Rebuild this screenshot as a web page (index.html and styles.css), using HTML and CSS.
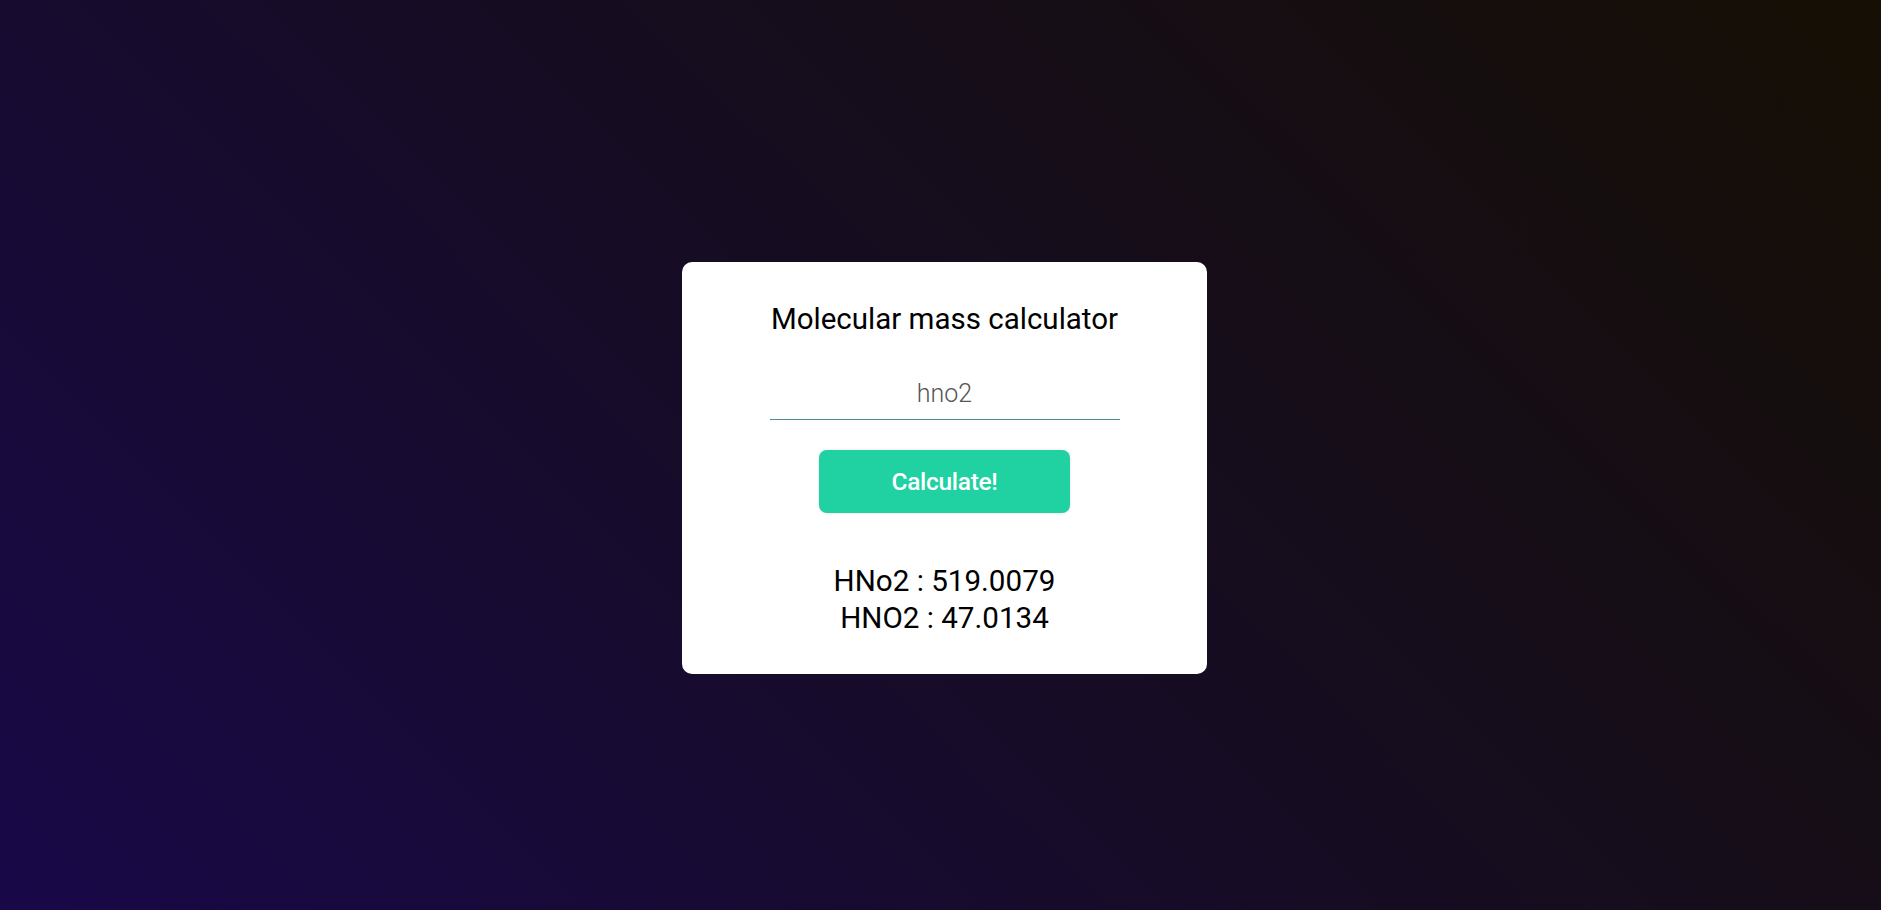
FILE: index.html
```html
<!DOCTYPE html>
<html lang="en">
<head>
<meta charset="utf-8">
<title>Molecular mass calculator</title>
<link rel="stylesheet" href="styles.css">
</head>
<body>
<main class="page">
  <section class="card">
    <h1 class="title">Molecular mass calculator</h1>
    <input class="formula" type="text" value="hno2">
    <button class="calc-btn" type="button">Calculate!</button>
    <div class="results">
      <div class="result">HNo2 : 519.0079</div>
      <div class="result">HNO2 : 47.0134</div>
    </div>
  </section>
</main>
</body>
</html>
```

FILE: styles.css
```css
* { box-sizing: border-box; }

html, body {
  margin: 0;
  height: 100%;
}

body {
  font-family: Roboto, "Liberation Sans", sans-serif;
  background: linear-gradient(45deg, #180848 0%, #160c22 50%, #150f04 100%);
  color: #000;
}

.page {
  height: 100%;
  display: flex;
  align-items: center;
  justify-content: center;
  padding: 25px 0 0 8px;
}

.card {
  width: 525px;
  background: #fff;
  border-radius: 10px;
  padding: 40px 0 37px;
  display: flex;
  flex-direction: column;
  align-items: center;
}

.title {
  margin: 0;
  font-size: 29.5px;
  font-weight: 400;
  line-height: 35px;
}

.formula {
  margin-top: 38px;
  width: 350px;
  border: none;
  border-bottom: 1px solid #4b8f91;
  outline: none;
  background: transparent;
  padding: 5px 0 11px;
  font-family: Roboto, "Liberation Sans", sans-serif;
  font-size: 25px;
  font-weight: 300;
  line-height: 28px;
  color: #555;
  text-align: center;
}

.calc-btn {
  margin-top: 30px;
  width: 251px;
  height: 63px;
  border: none;
  border-radius: 8px;
  background: #20d1a1;
  box-shadow: 0 0 3px rgba(0, 0, 0, 0.12);
  color: #fff;
  font-family: Roboto, "Liberation Sans", sans-serif;
  font-size: 24.5px;
  font-weight: 500;
  letter-spacing: -0.3px;
  cursor: pointer;
}

.results {
  margin-top: 50px;
  text-align: center;
}

.result {
  font-size: 29.6px;
  line-height: 37px;
}
```
